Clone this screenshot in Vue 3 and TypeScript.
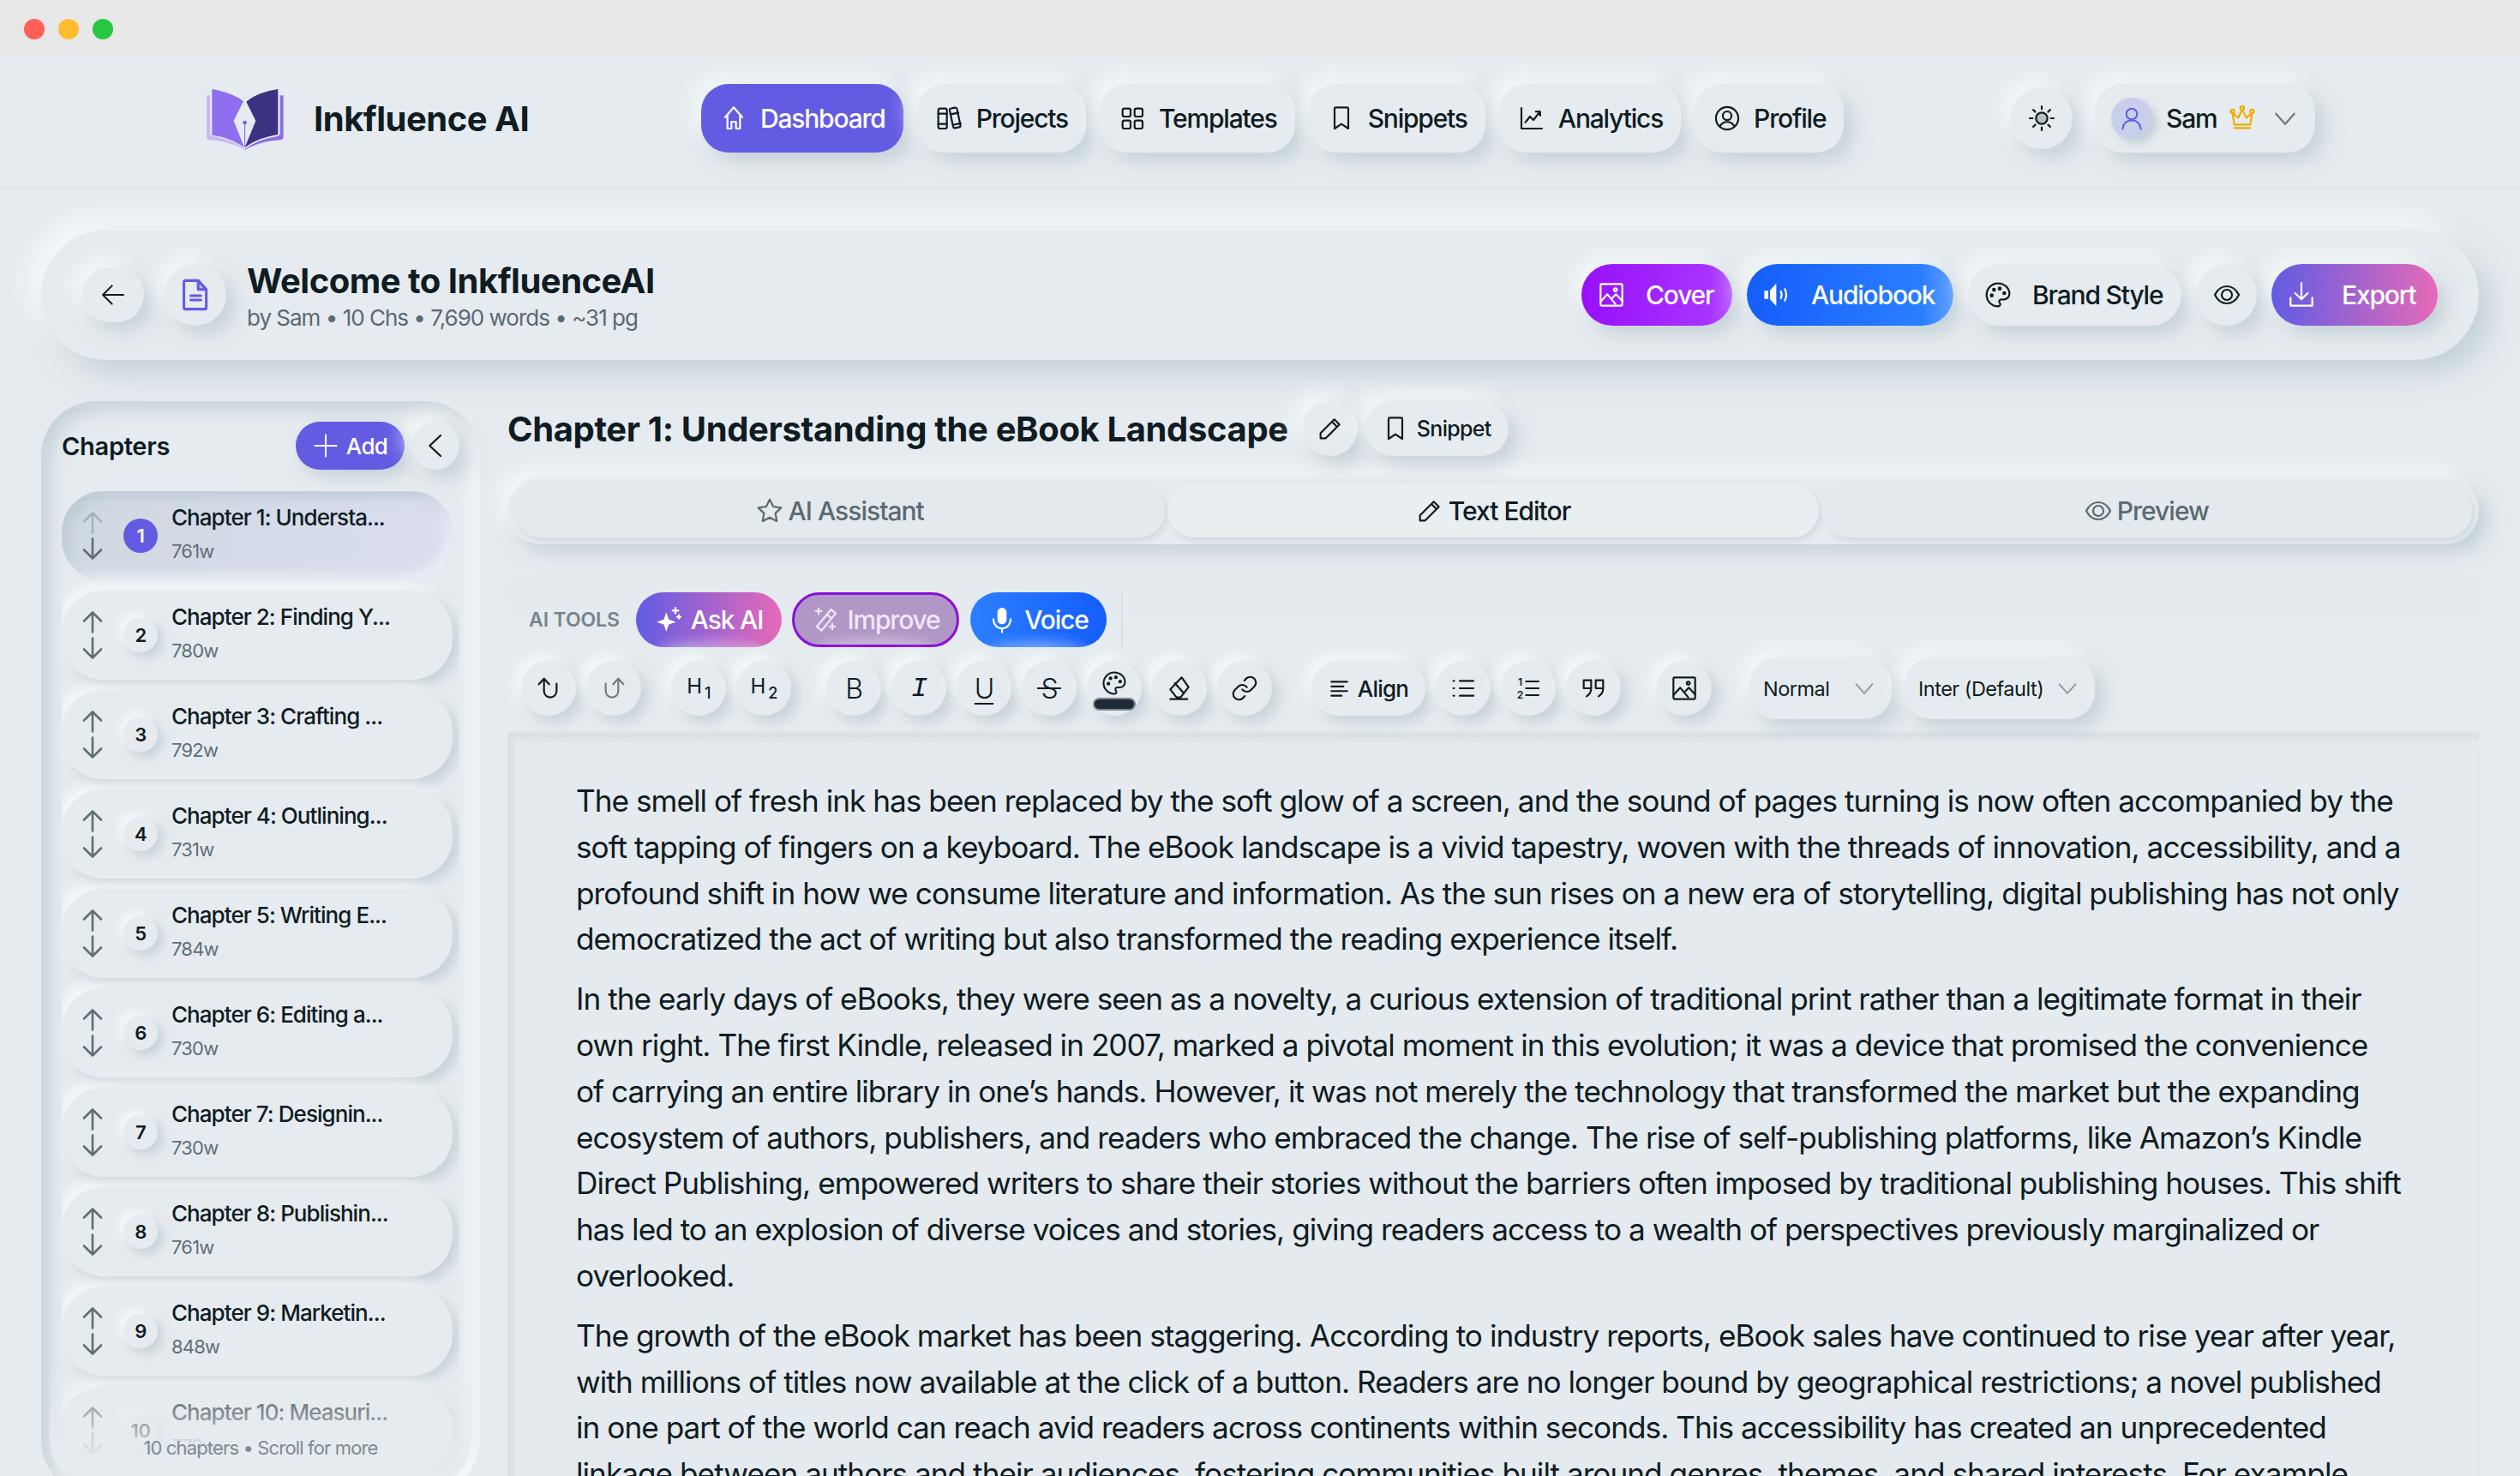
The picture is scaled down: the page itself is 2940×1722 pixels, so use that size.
<script setup lang="ts">
const icons: Record<string, string> = {
  home: '<path d="M4.500 11 12 2.500 19.500 11M6.500 9v12h3.500v-6h4v6h3.500V9"/>',
  books: '<rect x="2" y="3.500" width="7.500" height="17.500" rx="1.500"/><path d="M2 8h7.500M2 17h7.500"/><rect x="13.500" y="3" width="6.500" height="17.500" rx="1.500" transform="rotate(-12 16 12)"/><path d="M13.600 8.400l6-1.200M15.600 17.600l6-1.200"/>',
  grid: '<rect x="3.500" y="3.500" width="7" height="7" rx="1.500"/><rect x="14" y="3.500" width="7" height="7" rx="1.500"/><rect x="3.500" y="14" width="7" height="7" rx="1.500"/><rect x="14" y="14" width="7" height="7" rx="1.500"/>',
  bookmark: '<path d="M6 3.500c0-.5.3-1 1-1h10c.7 0 1 .5 1 1V21l-6-4-6 4z"/>',
  chart: '<path d="M3 3v18h18M6.500 15.500l4-5 3 3 5.500-7M15.500 6.200 19.200 6l.3 3.600"/>',
  userc: '<circle cx="12" cy="12" r="9.800"/><circle cx="12" cy="9.800" r="3.800"/><path d="M5.600 19.200c1.400-2.800 3.600-4 6.400-4s5 1.200 6.400 4"/>',
  sun: '<circle cx="12" cy="12" r="5" fill="#b7c0c5"/><path d="M12 1.500v2.500M12 20v2.500M1.500 12H4M20 12h2.500M4.600 4.600l1.800 1.800M17.600 17.600l1.800 1.800M4.600 19.400l1.800-1.800M17.600 6.400l1.800-1.800"/>',
  user: '<circle cx="12" cy="8" r="5"/><path d="M3.500 22c.6-5 3.600-8 8.500-8s7.900 3 8.500 8"/>',
  crown: '<path d="M5 20.500h14M5 17.500 3.500 7.500l5 4L12 4.500l3.500 7 5-4L19 17.500z"/><circle cx="3.500" cy="6" r="1.600"/><circle cx="12" cy="3" r="1.600"/><circle cx="20.500" cy="6" r="1.600"/>',
  chev: '<path d="M4 8l8 9 8-9"/>',
  left: '<path d="M21 12H4M11 4l-8 8 8 8"/>',
  chevl: '<path d="M16.500 3 7 12l9.500 9"/>',
  doc: '<path d="M4.500 1.500h9.500l6 6.500v13.500a1 1 0 0 1-1 1H4.500a1 1 0 0 1-1-1v-19a1 1 0 0 1 1-1z"/><path d="M14 1.500V8h6z" fill="#b9b5f2"/><path d="M8.500 12.700h7.500M8.500 15.800h7.500"/>',
  image: '<rect x="2.500" y="2.500" width="19" height="19" rx="1"/><path d="M2.500 18l6-6.500 7 8.500M13 14.500l3-3 5.500 6"/><circle cx="15.500" cy="7.500" r="1.300"/>',
  speaker: '<path d="M1 8.500h3.500v7H1zM6 8 11.500 2v20L6 16z" fill="currentColor" stroke="none"/><path d="M15.500 9c1 2 1 4 0 6M19 7c1.600 3.200 1.600 6.800 0 10"/>',
  palette: '<path d="M12 22a1 1 0 0 1 0-20 10 9 0 0 1 10 9 5 5 0 0 1-5 5h-2.250a1.750 1.750 0 0 0-1.400 2.800l.3.4a1.750 1.750 0 0 1-1.400 2.800z"/><circle cx="13.500" cy="6.500" r=".9" fill="currentColor"/><circle cx="17.500" cy="10.500" r=".9" fill="currentColor"/><circle cx="6.500" cy="12.500" r=".9" fill="currentColor"/><circle cx="8.500" cy="7.500" r=".9" fill="currentColor"/>',
  eye: '<path d="M1.500 12C4 7 7.500 4.500 12 4.500S20 7 22.500 12c-2.500 5-6 7.500-10.500 7.500S4 17 1.500 12z"/><circle cx="12" cy="12" r="4.500"/>',
  download: '<path d="M12 1.500v14M6.500 10.500l5.500 5.500 5.500-5.500M2.500 14.500v7h19v-7"/>',
  plus: '<path d="M12 2v20M2 12h20"/>',
  star: '<path d="M12 2l3.090 6.260L22 9.270l-5 4.870 1.180 6.880L12 17.770l-6.180 3.250L7 14.140 2 9.270l6.910-1.010z"/>',
  pencil: '<path d="M3.500 20.500V16L15.500 4l4.500 4.500L8 20.500zM13.500 6l4.500 4.500"/>',
  spark: '<path d="M10 5.500l2.200 6.300 6.300 2.200-6.300 2.200L10 22.500l-2.200-6.300L1.500 14l6.300-2.200z" fill="currentColor" stroke="none"/><path d="M18 1.500v5M15.500 4h5M21 8v3M19.500 9.500h3" />',
  wand: '<path d="M17 3l4 3.500L8.500 21.500l-4-3.500zM13.500 7.500l4 3.500M6 2v5M3.500 4.500h5M18 15.500v5M15.500 18h5"/>',
  mic: '<rect x="8" y="1.500" width="8" height="14.500" rx="4" fill="currentColor" stroke="none"/><path d="M4.500 11.500c0 5 3.500 8 7.500 8s7.500-3 7.500-8M12 19.500v3.500"/>',
  undo: '<path d="M3.500 8.500 8 3.500l4.500 5M8 4v10.500a5.500 5.500 0 0 0 11 0V8"/>',
  redo: '<path d="M20.500 8.500 16 3.500l-4.500 5M16 4v10.500a5.500 5.500 0 0 1-11 0V8"/>',
  eraser: '<path d="M14 2.500 20 11l-7 9H9.500L4 13zM8 7.500 15.500 16M4 21.500h15"/>',
  link: '<path d="M10 13a5 5 0 0 0 7.540.54l3-3a5 5 0 0 0-7.070-7.070l-1.720 1.710M14 11a5 5 0 0 0-7.540-.54l-3 3a5 5 0 0 0 7.070 7.070l1.710-1.710"/>',
  align: '<path d="M3 5h17M3 10h13M3 15h17M3 20h11"/>',
  list: '<path d="M9 5.500h12M9 12h12M9 18.500h12M3.500 5.500h.6M3.500 12h.6M3.500 18.500h.6"/>',
  olist: '<path d="M10 6h11M10 12h11M10 18h11"/><text x="3" y="10" class="tiny">1</text><text x="2" y="21" class="tiny">2</text>',
  quote: '<path d="M3.500 5h6.500v7H3.500zM10 12c0 3.200-1.500 5.500-4 7M14 5h6.500v7H14zM20.500 12c0 3.200-1.500 5.500-4 7"/>',
  up: '<path d="M12 24.500V1.500M2 11.500 12 1.500l10 10"/>',
  down: '<path d="M12 1.500v23M2 14.500l10 10 10-10"/>',
}

interface NavItem { label: string; icon: string; active?: boolean }
const navItems: NavItem[] = [
  { label: 'Dashboard', icon: 'home', active: true },
  { label: 'Projects', icon: 'books' },
  { label: 'Templates', icon: 'grid' },
  { label: 'Snippets', icon: 'bookmark' },
  { label: 'Analytics', icon: 'chart' },
  { label: 'Profile', icon: 'userc' },
]

const chapters = [
  { n: 1, t: 'Chapter 1: Understa...', w: '761w' },
  { n: 2, t: 'Chapter 2: Finding Y...', w: '780w' },
  { n: 3, t: 'Chapter 3: Crafting ...', w: '792w' },
  { n: 4, t: 'Chapter 4: Outlining...', w: '731w' },
  { n: 5, t: 'Chapter 5: Writing E...', w: '784w' },
  { n: 6, t: 'Chapter 6: Editing a...', w: '730w' },
  { n: 7, t: 'Chapter 7: Designin...', w: '730w' },
  { n: 8, t: 'Chapter 8: Publishin...', w: '761w' },
  { n: 9, t: 'Chapter 9: Marketin...', w: '848w' },
  { n: 10, t: 'Chapter 10: Measuri...', w: '773w' },
]

const tabs = [
  { label: 'AI Assistant', icon: 'star' },
  { label: 'Text Editor', icon: 'pencil', active: true },
  { label: 'Preview', icon: 'eye' },
]

const paragraphs = [
  'The smell of fresh ink has been replaced by the soft glow of a screen, and the sound of pages turning is now often accompanied by the soft tapping of fingers on a keyboard. The eBook landscape is a vivid tapestry, woven with the threads of innovation, accessibility, and a profound shift in how we consume literature and information. As the sun rises on a new era of storytelling, digital publishing has not only democratized the act of writing but also transformed the reading experience itself.',
  'In the early days of eBooks, they were seen as a novelty, a curious extension of traditional print rather than a legitimate format in their own right. The first Kindle, released in 2007, marked a pivotal moment in this evolution; it was a device that promised the convenience\nof carrying an entire library in one’s hands. However, it was not merely the technology that transformed the market but the expanding ecosystem of authors, publishers, and readers who embraced the change. The rise of self-publishing platforms, like Amazon’s Kindle Direct Publishing, empowered writers to share their stories without the barriers often imposed by traditional publishing houses. This shift has led to an explosion of diverse voices and stories, giving readers access to a wealth of perspectives previously marginalized or overlooked.',
  'The growth of the eBook market has been staggering. According to industry reports, eBook sales have continued to rise year after year, with millions of titles now available at the click of a button. Readers are no longer bound by geographical restrictions; a novel published\nin one part of the world can reach avid readers across continents within seconds. This accessibility has created an unprecedented linkage between authors and their audiences, fostering communities built around genres, themes, and shared interests. For example,',
]
</script>

<template>
  <div class="window">
    <div class="titlebar">
      <span class="dot red"></span><span class="dot yellow"></span><span class="dot green"></span>
    </div>

    <header class="nav">
      <div class="brand">
        <svg class="logo" viewBox="0 0 360 255" width="120" height="85">
          <path d="M33 46h12v128c0 10 3 14 12 16 42 6 78 20 108 42l4 6c-32-20-78-34-124-36-9-1-12-4-12-12z" fill="#c9b6fb" />
          <path d="M302 46h-12v128c0 10-3 14-12 16-42 6-78 20-108 42l-4 6c32-20 78-34 124-36 9-1 12-4 12-12z" fill="#8c6de8" />
          <path d="M52 24c42 6 80 20 110 42l-34 69 37 93c-34-24-72-38-113-43z" fill="#8f6ef0" />
          <path d="M283 24c-42 6-82 20-111 44l33 67-38 93c33-24 72-38 116-45z" fill="#3b3282" />
          <circle cx="167" cy="141" r="7" fill="#7a5de0" />
          <path d="M167 141v86" stroke="#7a5de0" stroke-width="3" fill="none" />
        </svg>
        <span class="brand-name">Inkfluence AI</span>
      </div>
      <nav class="nav-items">
        <a v-for="item in navItems" :key="item.label" class="neo nav-btn" :class="{ active: item.active }">
          <svg class="ic" viewBox="0 0 24 24" v-html="icons[item.icon]"></svg>
          <span>{{ item.label }}</span>
        </a>
      </nav>
      <div class="nav-right">
        <button class="neo round sun"><svg class="ic" viewBox="0 0 24 24" v-html="icons.sun"></svg></button>
        <div class="neo user">
          <span class="avatar"><svg class="ic" viewBox="0 0 24 24" v-html="icons.user"></svg></span>
          <span class="user-name">Sam</span>
          <svg class="ic crown" viewBox="0 0 24 24" v-html="icons.crown"></svg>
          <svg class="ic chev" viewBox="0 0 24 24" v-html="icons.chev"></svg>
        </div>
      </div>
    </header>

    <div class="page">
      <section class="neo doc">
        <button class="neo back"><svg class="ic" viewBox="0 0 24 24" v-html="icons.left"></svg></button>
        <span class="neo round docicon"><svg class="ic" viewBox="0 0 24 24" v-html="icons.doc"></svg></span>
        <div class="doc-text">
          <h1>Welcome to InkfluenceAI</h1>
          <p>by Sam • 10 Chs • 7,690 words • ~31 pg</p>
        </div>
        <div class="doc-actions">
          <button class="act cover"><svg class="ic" viewBox="0 0 24 24" v-html="icons.image"></svg>Cover</button>
          <button class="act audio"><svg class="ic" viewBox="0 0 24 24" v-html="icons.speaker"></svg>Audiobook</button>
          <button class="act neo brandstyle"><svg class="ic" viewBox="0 0 24 24" v-html="icons.palette"></svg>Brand Style</button>
          <button class="neo round preview"><svg class="ic" viewBox="0 0 24 24" v-html="icons.eye"></svg></button>
          <button class="act export"><svg class="ic" viewBox="0 0 24 24" v-html="icons.download"></svg>Export</button>
        </div>
      </section>

      <div class="workspace">
        <aside class="sidebar">
          <div class="side-head">
            <h2>Chapters</h2>
            <button class="add"><svg class="ic" viewBox="0 0 24 24" v-html="icons.plus"></svg>Add</button>
            <button class="neo round collapse"><svg class="ic" viewBox="0 0 24 24" v-html="icons.chevl"></svg></button>
          </div>
          <div class="chapter-list">
            <div v-for="c in chapters" :key="c.n" class="chapter" :class="{ current: c.n === 1 }">
              <div class="arrows">
                <svg viewBox="0 0 24 26" v-html="icons.up"></svg>
                <svg viewBox="0 0 24 26" v-html="icons.down"></svg>
              </div>
              <span class="num">{{ c.n }}</span>
              <div class="ch-text">
                <div class="ch-title">{{ c.t }}</div>
                <div class="ch-words">{{ c.w }}</div>
              </div>
            </div>
          </div>
          <div class="side-foot">10 chapters • Scroll for more</div>
        </aside>

        <main class="main">
          <div class="title-row">
            <h2>Chapter 1: Understanding the eBook Landscape</h2>
            <button class="neo round edit"><svg class="ic" viewBox="0 0 24 24" v-html="icons.pencil"></svg></button>
            <button class="neo snippet"><svg class="ic" viewBox="0 0 24 24" v-html="icons.bookmark"></svg>Snippet</button>
          </div>

          <div class="tabs">
            <button v-for="t in tabs" :key="t.label" class="tab" :class="{ on: t.active }">
              <svg class="ic" viewBox="0 0 24 24" v-html="icons[t.icon]"></svg>{{ t.label }}
            </button>
          </div>

          <div class="toolbar">
            <div class="ai-row">
              <span class="ai-label">AI TOOLS</span>
              <button class="ai ask"><svg class="ic" viewBox="0 0 24 24" v-html="icons.spark"></svg>Ask AI</button>
              <button class="ai improve"><svg class="ic" viewBox="0 0 24 24" v-html="icons.wand"></svg>Improve</button>
              <button class="ai voice"><svg class="ic" viewBox="0 0 24 24" v-html="icons.mic"></svg>Voice</button>
              <span class="ai-div"></span>
            </div>
            <div class="fmt-row">
              <div class="fmt-group">
                <button class="neo fmt"><svg class="ic" viewBox="0 0 24 24" v-html="icons.undo"></svg></button>
                <button class="neo fmt dim"><svg class="ic" viewBox="0 0 24 24" v-html="icons.redo"></svg></button>
              </div>
              <div class="fmt-group g-h">
                <button class="neo fmt heading"><span class="hd">H<sub>1</sub></span></button>
                <button class="neo fmt heading"><span class="hd">H<sub>2</sub></span></button>
              </div>
              <div class="fmt-group g-b">
                <button class="neo fmt letter">B</button>
                <button class="neo fmt letter ital">I</button>
                <button class="neo fmt letter und">U</button>
                <button class="neo fmt letter strike">S</button>
                <button class="neo fmt swatch">
                  <svg class="ic" viewBox="0 0 24 24" v-html="icons.palette"></svg>
                  <span class="swatch-bar"></span>
                </button>
                <button class="neo fmt"><svg class="ic" viewBox="0 0 24 24" v-html="icons.eraser"></svg></button>
                <button class="neo fmt"><svg class="ic" viewBox="0 0 24 24" v-html="icons.link"></svg></button>
              </div>
              <div class="fmt-group g-a">
                <button class="neo fmt alignb"><svg class="ic" viewBox="0 0 24 24" v-html="icons.align"></svg>Align</button>
                <button class="neo fmt"><svg class="ic" viewBox="0 0 24 24" v-html="icons.list"></svg></button>
                <button class="neo fmt"><svg class="ic" viewBox="0 0 24 24" v-html="icons.olist"></svg></button>
                <button class="neo fmt"><svg class="ic" viewBox="0 0 24 24" v-html="icons.quote"></svg></button>
              </div>
              <button class="neo fmt g-i"><svg class="ic" viewBox="0 0 24 24" v-html="icons.image"></svg></button>
              <button class="neo select sel-n">Normal<svg class="ic" viewBox="0 0 24 24" v-html="icons.chev"></svg></button>
              <button class="neo select sel-f">Inter (Default)<svg class="ic" viewBox="0 0 24 24" v-html="icons.chev"></svg></button>
            </div>
          </div>

          <article class="editor">
            <p v-for="(p, i) in paragraphs" :key="i">{{ p }}</p>
          </article>
        </main>
      </div>
    </div>
  </div>
</template>

<style>
html, body { margin: 0; background: #e6ebef; }
</style>

<style scoped>
* { box-sizing: border-box; letter-spacing: -0.04em; }
button { font: inherit; color: inherit; border: 0; padding: 0; background: none; }
h1, h2, p { margin: 0; }

.window {
  width: 2940px; height: 1722px; overflow: hidden;
  background: #e6ebef; color: #0f1c22;
  font-family: Inter, "Liberation Sans", sans-serif;
}
.ic { width: 32px; height: 32px; fill: none; stroke: currentColor; stroke-width: 1.65; stroke-linecap: round; stroke-linejoin: round; flex: none; display: block; }
:deep(.tiny) { font: 600 9px Inter, sans-serif; fill: currentColor; stroke: none; }

.neo {
  background: #e6ebef;
  box-shadow: 10px 10px 22px rgba(176, 194, 203, .62), -10px -10px 22px rgba(250, 253, 254, .72);
}
.round { border-radius: 50%; display: flex; align-items: center; justify-content: center; flex: none; }

.titlebar { height: 64px; background: #e8e8e8; display: flex; align-items: center; gap: 16px; padding-left: 28px; }
.dot { width: 24px; height: 24px; border-radius: 50%; margin-top: 4px; }
.red { background: #ff5f57; } .yellow { background: #febc2e; } .green { background: #28c840; }

.nav { height: 156px; padding: 34px 239px 40px 230px; display: flex; align-items: center; border-bottom: 2px solid #dfe5e9; }
.brand { width: 588px; display: flex; align-items: center; gap: 16px; flex: none; }
.logo { display: block; flex: none; }
.brand-name { font-size: 40px; font-weight: 700; letter-spacing: -0.5px; }
.nav-items { display: flex; gap: 16px; }
.nav-btn { height: 80px; padding: 0 21px 0 22px; border-radius: 32px; display: flex; align-items: center; gap: 15px; font-size: 30px; font-weight: 550; }
.nav-btn span { letter-spacing: -1.2px; }
.nav-btn.active { background: #635ce3; color: #fff; }
.nav-right { margin-left: auto; display: flex; align-items: center; gap: 26px; }
.sun { width: 72px; height: 72px; }
.user { height: 80px; width: 257px; border-radius: 32px; display: flex; align-items: center; padding: 0 19px 0 19px; }
.avatar { width: 48px; height: 48px; border-radius: 50%; background: #c9cfea; color: #635ce3; display: flex; align-items: center; justify-content: center; box-shadow: 5px 5px 10px rgba(176, 194, 203, .7); }
.avatar .ic { width: 30px; height: 30px; }
.user-name { font-size: 30px; font-weight: 550; margin-left: 16px; letter-spacing: -1.2px; }
.crown { color: #f0ad00; margin-left: 14px; }
.chev { margin-left: auto; color: #6a787f; }

.page { padding: 48px 48px 0; }
.doc { height: 152px; border-radius: 76px; padding: 0 48px; display: flex; align-items: center; box-shadow: 16px 16px 32px rgba(176, 194, 203, .62), -14px -14px 30px rgba(250, 253, 254, .8); }
.back { width: 72px; height: 64px; border-radius: 32px; display: flex; align-items: center; justify-content: center; flex: none; }
.back .ic { stroke-width: 1.5; }
.docicon { width: 72px; height: 72px; margin-left: 24px; color: #635ce3; }
.docicon .ic { width: 38px; height: 38px; stroke-width: 1.9; }
.doc-text { margin-left: 24px; padding-top: 4px; }
.doc-text h1 { font-size: 40px; font-weight: 700; letter-spacing: -0.5px; line-height: 50px; }
.doc-text p { font-size: 26px; line-height: 36px; color: #5a6a72; letter-spacing: -1px; }
.doc-actions { margin-left: auto; display: flex; align-items: center; gap: 17px; }
.act { height: 72px; border-radius: 36px; padding: 0 0 0 19px; display: flex; align-items: center; gap: 24px; font-size: 30px; font-weight: 550; letter-spacing: -1.2px; color: #fff; box-shadow: 10px 10px 22px rgba(176, 194, 203, .62), -10px -10px 22px rgba(250, 253, 254, .72); }
.cover { width: 176px; background: linear-gradient(90deg, #9810fa, #a833ff 85%, #bb5cff); }
.audio { width: 241px; background: linear-gradient(90deg, #155dfc, #2b7fff 85%, #5f9eff); }
.brandstyle { width: 249px; color: #0f1c22; background: #e6ebef; }
.export { width: 194px; gap: 31px; background: linear-gradient(90deg, #615ce3, #e66ab8); }
.preview { width: 71px; height: 72px; }

.workspace { display: grid; grid-template-columns: 512px 1fr; gap: 32px; margin-top: 48px; }

.sidebar {
  position: relative; height: 1276px; border-radius: 64px; padding: 24px 24px 0;
  box-shadow: inset 10px 10px 20px rgba(176, 194, 203, .6), inset -10px -10px 20px rgba(250, 253, 254, .75);
}
.side-head { height: 56px; display: flex; align-items: center; }
.side-head h2 { font-size: 29px; font-weight: 600; flex: 1; letter-spacing: -0.3px; }
.add { width: 127px; height: 56px; border-radius: 28px; background: #635ce3; color: #fff; display: flex; align-items: center; justify-content: center; gap: 9px; font-size: 26px; font-weight: 550; letter-spacing: -0.7px; box-shadow: 8px 8px 18px rgba(176, 194, 203, .62); }
.add .ic { width: 30px; height: 30px; }
.collapse { width: 56px; height: 56px; margin-left: 8px; }
.chapter-list { margin-top: 25px; width: 464px; height: 1146px; overflow: hidden; display: flex; flex-direction: column; gap: 12px; }
.chapter {
  flex: none; width: 456px; height: 104px; border-radius: 48px; display: flex; align-items: center; padding-left: 26px;
  background: #e6ebef; box-shadow: 7px 7px 14px rgba(176, 194, 203, .6), -7px -7px 14px rgba(250, 253, 254, .72);
}
.chapter.current {
  background: linear-gradient(100deg, #d0d8e0, #dadef0);
  box-shadow: inset 7px 7px 14px rgba(176, 194, 203, .6), inset -7px -7px 14px rgba(240, 244, 248, .8);
}
.arrows { width: 24px; display: flex; flex-direction: column; gap: 4px; color: #5f6f76; flex: none; margin-left: -2px; }
.arrows svg { width: 24px; height: 26px; display: block; fill: none; stroke: currentColor; stroke-width: 2.6; stroke-linecap: round; stroke-linejoin: round; }
.current .arrows svg:first-child { opacity: .35; }
.num {
  width: 40px; height: 40px; margin-left: 24px; border-radius: 50%; display: flex; align-items: center; justify-content: center;
  font-size: 22px; font-weight: 600; flex: none; background: #e6ebef; letter-spacing: -0.5px;
  box-shadow: 6px 6px 12px rgba(176, 194, 203, .6), -6px -6px 12px rgba(250, 253, 254, .72);
}
.current .num { background: #635ce3; color: #fff; box-shadow: none; }
.ch-text { margin-left: 16px; white-space: nowrap; padding-bottom: 5px; }
.ch-title { font-size: 26px; font-weight: 500; line-height: 34px; letter-spacing: -0.95px; }
.ch-words { font-size: 22px; line-height: 30px; color: #5f6f76; margin-top: 7px; letter-spacing: -0.8px; }
.side-foot {
  position: absolute; left: 10px; right: 10px; bottom: 10px; height: 150px; display: flex; align-items: flex-end; justify-content: center;
  padding-bottom: 32px; font-size: 22px; color: #7d8a91; letter-spacing: -0.85px; border-radius: 0 0 54px 54px;
  background: linear-gradient(180deg, rgba(230, 235, 239, 0), rgba(230, 235, 239, .95) 75%);
}

.main { min-width: 0; }
.title-row { height: 64px; display: flex; align-items: center; }
.title-row h2 { font-size: 40px; font-weight: 700; letter-spacing: -0.37px; white-space: nowrap; }
.edit { width: 64px; height: 64px; margin-left: 17px; }
.snippet { height: 64px; width: 168px; margin-left: 8px; border-radius: 32px; display: flex; align-items: center; justify-content: center; gap: 9px; font-size: 25px; font-weight: 500; letter-spacing: -0.7px; }

.tabs {
  margin-top: 25px; height: 78px; padding: 8px; display: grid; grid-template-columns: repeat(3, 1fr); gap: 3px; border-radius: 40px;
  background: #e6ebef; box-shadow: 10px 10px 22px rgba(176, 194, 203, .62), -10px -10px 22px rgba(250, 253, 254, .72);
}
.tab { height: 62px; border-radius: 32px; display: flex; align-items: center; justify-content: center; gap: 6px; font-size: 30px; font-weight: 500; letter-spacing: -1px; color: #5a6a72; background: #e4e9ed; box-shadow: 3px 4px 6px rgba(176, 194, 203, .4); }
.tab.on { color: #0f1c22; background: #e9eef1; }

.toolbar { margin-top: 41px; height: 180px; padding: 15px 16px 0; background: linear-gradient(180deg, #e4eaed, #e7ecef); border-bottom: 3px solid #dfe5e9; }
.ai-row { display: flex; align-items: center; height: 64px; }
.ai-label { width: 104px; white-space: nowrap; font-size: 23px; font-weight: 600; color: #77858c; margin-left: 9px; letter-spacing: -0.1px; }
.ai { height: 64px; border-radius: 32px; display: flex; align-items: center; justify-content: center; gap: 10px; font-size: 30px; font-weight: 550; letter-spacing: -1.2px; color: #fff; position: relative; overflow: hidden; }
.ai::after { content: ""; position: absolute; left: 15%; right: 15%; bottom: -12px; height: 20px; background: rgba(255, 255, 255, .3); filter: blur(6px); border-radius: 50%; }
.ask { width: 170px; margin-left: 21px; background: linear-gradient(90deg, #615ce3, #e66ab8); }
.improve { width: 195px; margin-left: 12px; background: #b097c5; color: #f1e6fb; border: 3px solid #8a10d8; }
.voice { width: 159px; margin-left: 13px; background: linear-gradient(90deg, #2b7fff, #155dfc); }
.ai-div { width: 2px; height: 64px; background: #d8dfe3; margin-left: 17px; }

.fmt-row { display: flex; align-items: center; height: 72px; margin-top: 12px; }
.fmt-group { display: flex; gap: 12px; }
.fmt { width: 64px; height: 64px; border-radius: 50%; display: flex; align-items: center; justify-content: center; position: relative; flex: none; box-shadow: 8px 8px 16px rgba(176, 194, 203, .6), -8px -8px 16px rgba(250, 253, 254, .72); }
.dim { color: #6f7d84; }
.g-h { margin-left: 35px; }
.g-b { margin-left: 41px; }
.g-a { margin-left: 46px; }
.g-i { margin-left: 42px; }
.heading { font-size: 24px; font-weight: 400; }
.hd { display: block; line-height: 24px; letter-spacing: 0; padding-bottom: 4px; }
.hd sub { font-size: 18px; font-weight: 500; vertical-align: -6px; line-height: 0; margin-left: 3px; }
.letter { font-size: 32px; font-weight: 300; }
.ital { font-family: "Liberation Mono", monospace; font-style: italic; }
.und { text-decoration: underline; text-underline-offset: 5px; text-decoration-thickness: 2px; }
.strike::after { content: ""; position: absolute; left: 18px; right: 18px; top: 31px; height: 2px; background: #0f1c22; }
.swatch .ic { margin-top: -12px; width: 30px; height: 30px; }
.swatch-bar { position: absolute; left: 9px; right: 9px; bottom: 8px; height: 11px; border-radius: 6px; background: #1f2a37; box-shadow: 0 0 0 2px #7a8690; }
.alignb { width: 133px; border-radius: 32px; gap: 8px; font-size: 26px; font-weight: 500; letter-spacing: -0.8px; }
.alignb .ic { width: 26px; height: 26px; stroke-width: 2; }
.select { height: 72px; border-radius: 32px; display: flex; align-items: center; font-size: 23.5px; letter-spacing: -0.5px; padding: 0 18px 0 16px; justify-content: space-between; flex: none; }
.select .ic { width: 28px; height: 28px; color: #8d999f; }
.sel-n { width: 166px; margin-left: 44px; }
.sel-f { width: 222px; margin-left: 15px; }

.editor {
  height: 900px; padding: 52px 80px 0; font-size: 35.2px; line-height: 53.8px; background: #e5eaee;
  box-shadow: inset 5px 3px 10px rgba(176, 194, 203, .35);
}
.editor p { margin-bottom: 16px; letter-spacing: -0.98px; white-space: pre-line; }
</style>
